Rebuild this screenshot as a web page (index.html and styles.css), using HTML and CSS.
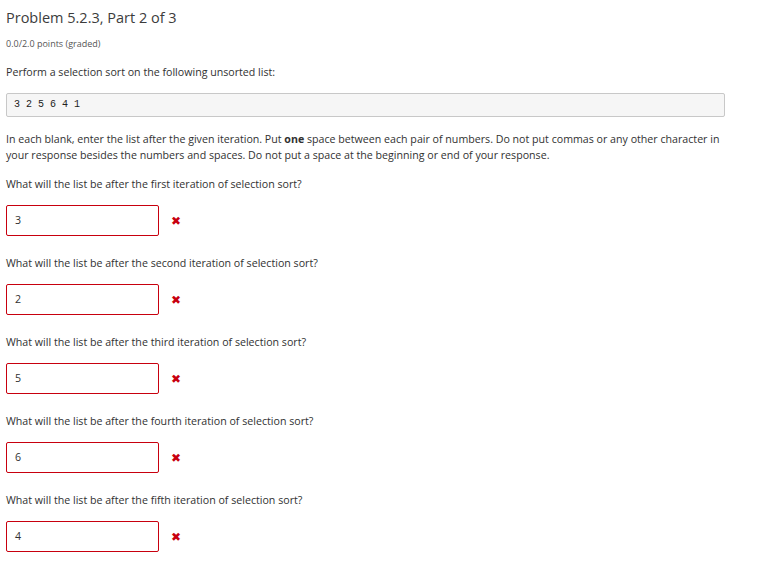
FILE: index.html
```html
<!DOCTYPE html>
<html>
<head>
<meta charset="utf-8">
<link rel="stylesheet" href="styles.css">
</head>
<body>
<div class="problem">
  <h3 class="title">Problem 5.2.3, Part 2 of 3</h3>
  <div class="points">0.0/2.0 points (graded)</div>
  <p class="intro">Perform a selection sort on the following unsorted list:</p>
  <pre class="list">3 2 5 6 4 1</pre>
  <p class="instructions">In each blank, enter the list after the given iteration. Put <strong>one</strong> space between each pair of numbers. Do not put commas or any other character in your response besides the numbers and spaces. Do not put a space at the beginning or end of your response.</p>

  <div class="question">
    <p class="prompt">What will the list be after the first iteration of selection sort?</p>
    <div class="answer-row"><div class="answer">3</div><span class="mark">&#10006;</span></div>
  </div>
  <div class="question">
    <p class="prompt">What will the list be after the second iteration of selection sort?</p>
    <div class="answer-row"><div class="answer">2</div><span class="mark">&#10006;</span></div>
  </div>
  <div class="question">
    <p class="prompt">What will the list be after the third iteration of selection sort?</p>
    <div class="answer-row"><div class="answer">5</div><span class="mark">&#10006;</span></div>
  </div>
  <div class="question">
    <p class="prompt">What will the list be after the fourth iteration of selection sort?</p>
    <div class="answer-row"><div class="answer">6</div><span class="mark">&#10006;</span></div>
  </div>
  <div class="question">
    <p class="prompt">What will the list be after the fifth iteration of selection sort?</p>
    <div class="answer-row"><div class="answer">4</div><span class="mark">&#10006;</span></div>
  </div>
</div>
</body>
</html>
```
FILE: styles.css
```css
html, body {
  margin: 0;
  padding: 0;
  background: #fff;
}
body {
  font-family: "Open Sans", "Liberation Sans", sans-serif;
  color: #313131;
}
.problem {
  width: 719px;
  padding: 8px 0 0 6px;
}
.title {
  margin: 0;
  font-size: 14.5px;
  font-weight: 400;
  line-height: 20px;
  color: #3c3c3c;
}
.points {
  margin-top: 10px;
  font-size: 9px;
  line-height: 12px;
  color: #555;
}
.intro {
  margin: 15px 0 0;
  font-size: 10.65px;
  line-height: 14px;
}
.list {
  margin: 14px 0 0;
  padding: 5px 7px;
  height: 12px;
  background: #f6f6f6;
  border: 1px solid #c8c8c8;
  border-radius: 2px;
  font-family: "Liberation Mono", "DejaVu Sans Mono", monospace;
  font-size: 10px;
  line-height: 12px;
  color: #222;
}
.instructions {
  margin: 14px 0 0;
  font-size: 10.65px;
  line-height: 16px;
}
.instructions strong {
  font-weight: 700;
}
.question {
  margin-top: 13px;
}
.question + .question {
  margin-top: 0;
}
.prompt {
  margin: 0;
  font-size: 10.65px;
  line-height: 16px;
}
.answer-row {
  display: flex;
  align-items: center;
  margin-top: 13px;
  margin-bottom: 19px;
}
.answer {
  box-sizing: border-box;
  width: 153px;
  height: 31px;
  padding: 0 8px;
  border: 1px solid #c8000e;
  border-radius: 2px;
  font-size: 10.65px;
  line-height: 29px;
  color: #313131;
}
.mark {
  margin-left: 12px;
  color: #c8000e;
  font-size: 11.5px;
  line-height: 1;
}
```
